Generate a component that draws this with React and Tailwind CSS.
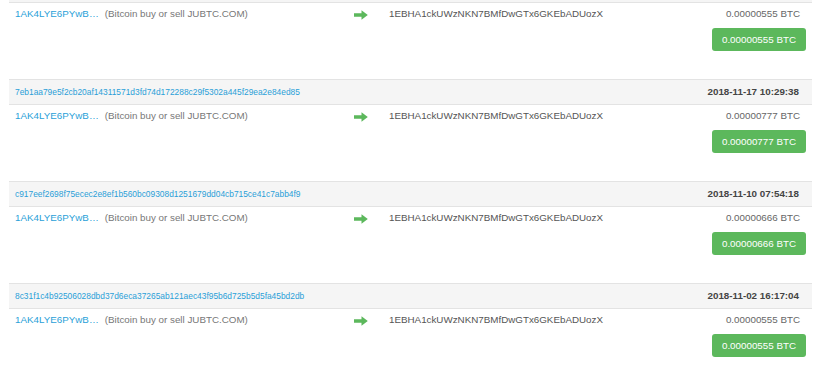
const txs = [
  {
    hash: "7eb1aa79e5f2cb20af14311571d3fd74d172288c29f5302a445f29ea2e84ed85",
    time: "2018-11-17 10:29:38",
    amount: "0.00000777 BTC",
  },
  {
    hash: "c917eef2698f75ecec2e8ef1b560bc09308d1251679dd04cb715ce41c7abb4f9",
    time: "2018-11-10 07:54:18",
    amount: "0.00000666 BTC",
  },
  {
    hash: "8c31f1c4b92506028dbd37d6eca37265ab121aec43f95b6d725b5d5fa45bd2db",
    time: "2018-11-02 16:17:04",
    amount: "0.00000555 BTC",
  },
];

const Arrow = () => (
  <svg width="14" height="10" viewBox="0 0 14 10" className="block">
    <path d="M0 3.2 H7.5 V0.2 L13.8 5 L7.5 9.8 V6.8 H0 Z" fill="#5cb85c" />
  </svg>
);

const TxRow = ({ amount }) => (
  <div className="flex h-[76px] pl-[6px] pt-[4px] text-[9.8px] leading-[14px]">
    <div className="w-[339px] flex gap-[6px] whitespace-nowrap">
      <a className="text-[#2a9fd8]">1AK4LYE6PYwB…</a>
      <span className="text-[#777]">(Bitcoin buy or sell JUBTC.COM)</span>
    </div>
    <div className="w-[35px] pt-[3px]">
      <Arrow />
    </div>
    <div className="flex-1 text-[#555]">1EBHA1ckUWzNKN7BMfDwGTx6GKEbADUozX</div>
    <div className="flex flex-col items-end pr-[6px]">
      <span className="pr-[6px] text-[#666]">{amount}</span>
      <span className="mt-[7px] h-[23px] w-[94px] rounded-[3px] bg-[#5cb85c] text-white flex items-center justify-center">
        {amount}
      </span>
    </div>
  </div>
);

const TxHeader = ({ hash, time }) => (
  <div className="h-[26px] border-y border-[#e3e3e3] bg-[#f5f5f5] flex items-center justify-between pl-[6px] pr-[13px]">
    <a className="text-[8.4px] text-[#2a9fd8]">{hash}</a>
    <span className="text-[9.8px] font-bold text-[#444]">{time}</span>
  </div>
);

export default function App() {
  return (
    <div className="w-[820px] h-[376px] overflow-hidden bg-white font-['Liberation_Sans',Arial,sans-serif]">
      <div className="ml-[9px] w-[803px]">
        <div className="h-[3px] bg-[#f5f5f5] border-b border-[#e3e3e3]" />
        <TxRow amount="0.00000555 BTC" />
        {txs.map((t) => (
          <div key={t.hash}>
            <TxHeader hash={t.hash} time={t.time} />
            <TxRow amount={t.amount} />
          </div>
        ))}
      </div>
    </div>
  );
}
